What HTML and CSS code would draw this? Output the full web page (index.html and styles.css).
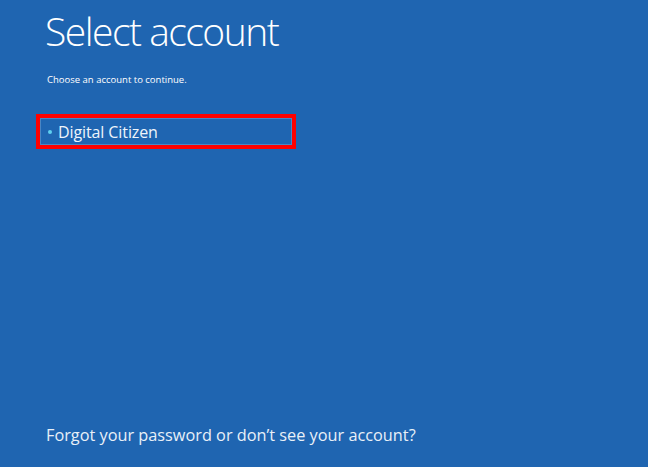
FILE: index.html
```html
<!DOCTYPE html>
<html>
    <head>
        <link rel="stylesheet" href="styles.css">
    </head>
    <body>
        <main class="screen">
            <h1 class="title">Select account</h1>
            <p class="hint">Choose an account to continue.</p>
            <ul class="accounts">
                <li class="account selected">
                    <span class="dot"></span>
                    <span class="name">Digital Citizen</span>
                </li>
            </ul>
            <a class="forgot">Forgot your password or don’t see your account?</a>
        </main>
    </body>
</html>
```

FILE: styles.css
```css
body {
    margin: 0;
    background-color: #1f65b1;
    color: #fff;
    font-family: "Open Sans", "Noto Sans", sans-serif;
}
.screen {
    display: flex;
    flex-direction: column;
    height: 467px;
    box-sizing: border-box;
    padding: 0 0 0 46px;
}
.title {
    margin: 6px 0 0 -1px;
    font-size: 39px;
    font-weight: 300;
    line-height: 50px;
    letter-spacing: -1.5px;
}
.hint {
    margin: 18px 0 0 1px;
    font-size: 9.5px;
    line-height: 12px;
}
.accounts {
    list-style: none;
    margin: 28px 0 0 -10px;
    padding: 0;
}
.account {
    display: flex;
    align-items: center;
    width: 252px;
    height: 27px;
    border: 4px solid #ff0000;
    box-shadow: inset 0 0 0 1px #4a86c4;
}
.dot {
    width: 4px;
    height: 4px;
    border-radius: 50%;
    background: #5fd0f0;
    margin: 0 6px 0 8px;
}
.name {
    font-size: 16px;
    letter-spacing: -0.1px;
    color: #eef4fb;
}
.forgot {
    margin-top: auto;
    margin-bottom: 20px;
    font-size: 16.3px;
    line-height: 24px;
    color: #e8f0f8;
}
```
